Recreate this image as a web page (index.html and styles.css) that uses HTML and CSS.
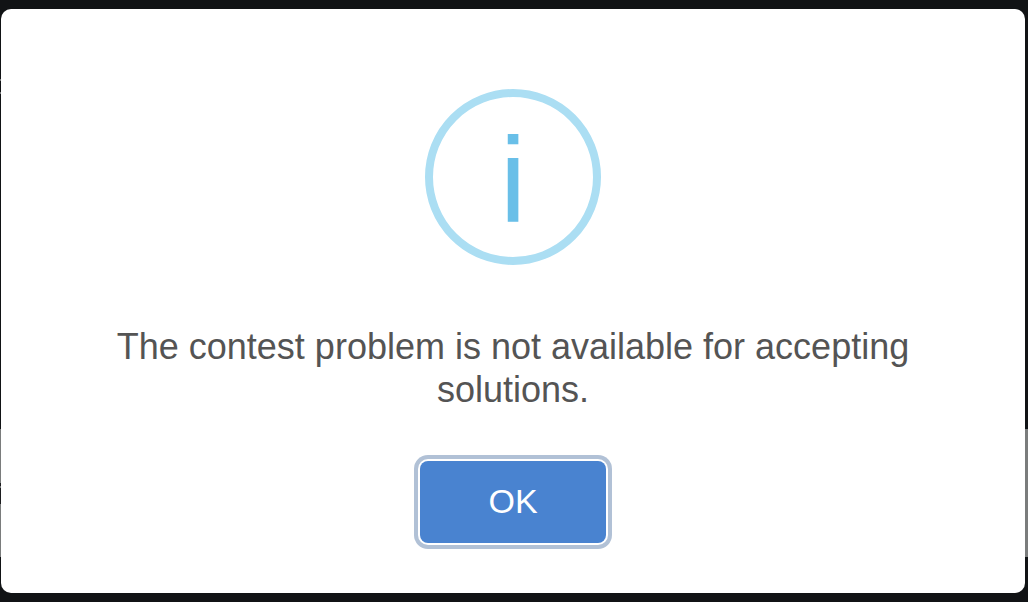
FILE: index.html
```html
<!DOCTYPE html>
<html lang="en">
<head>
<meta charset="utf-8">
<meta name="viewport" content="width=device-width, initial-scale=1">
<title>Notice</title>
<link rel="stylesheet" href="styles.css">
</head>
<body class="page">
<main class="dialog" role="alertdialog" aria-modal="true" aria-describedby="message">
  <div class="dialog-icon" aria-hidden="true"><span class="dialog-icon-mark">i</span></div>
  <p class="dialog-message" id="message">The contest problem is not available for accepting solutions.</p>
  <button class="dialog-confirm" type="button">OK</button>
</main>
</body>
</html>
```

FILE: styles.css
```css
* {
  box-sizing: border-box;
}

/* Dimmed page content shows at the edges, behind the dialog. */
.page {
  min-height: 100vh;
  margin: 0;
  padding: 9px 3px 9px 1px;
  background:
    linear-gradient(#77797a, #77797a) 0 79px / 1px 2px no-repeat,
    linear-gradient(#77797a, #77797a) 0 92px / 1px 2px no-repeat,
    linear-gradient(#77797a, #77797a) 0 486px / 1px 2px no-repeat,
    linear-gradient(#1c1d1f, #1c1d1f) 0 483px / 1px 21px no-repeat,
    linear-gradient(#7a7c7c, #7a7c7c) 0 429px / 100% 128px no-repeat,
    #111315;
  font-family: "Liberation Sans", Arial, sans-serif;
}

.dialog {
  display: flex;
  flex-direction: column;
  align-items: center;
  padding: 80px 72px 50px;
  border-radius: 10px;
  background: #fff;
}

.dialog-icon {
  display: flex;
  align-items: center;
  justify-content: center;
  width: 176px;
  height: 176px;
  padding-top: 4px;
  border: 8px solid #abdef3;
  border-radius: 50%;
  color: #69bfe8;
  font-size: 120px;
  line-height: 160px;
}

.dialog-message {
  margin: 60px 0 50px;
  color: #545454;
  font-size: 36px;
  line-height: 43px;
  text-align: center;
}

.dialog-confirm {
  padding: 19px 68px 21px;
  border: 0;
  border-radius: 8px;
  background: #4983d0;
  box-shadow: 0 0 0 2px #fff, 0 0 0 6px #b1c1d6;
  color: #fff;
  font-family: inherit;
  font-size: 34px;
  line-height: 42px;
}
```
